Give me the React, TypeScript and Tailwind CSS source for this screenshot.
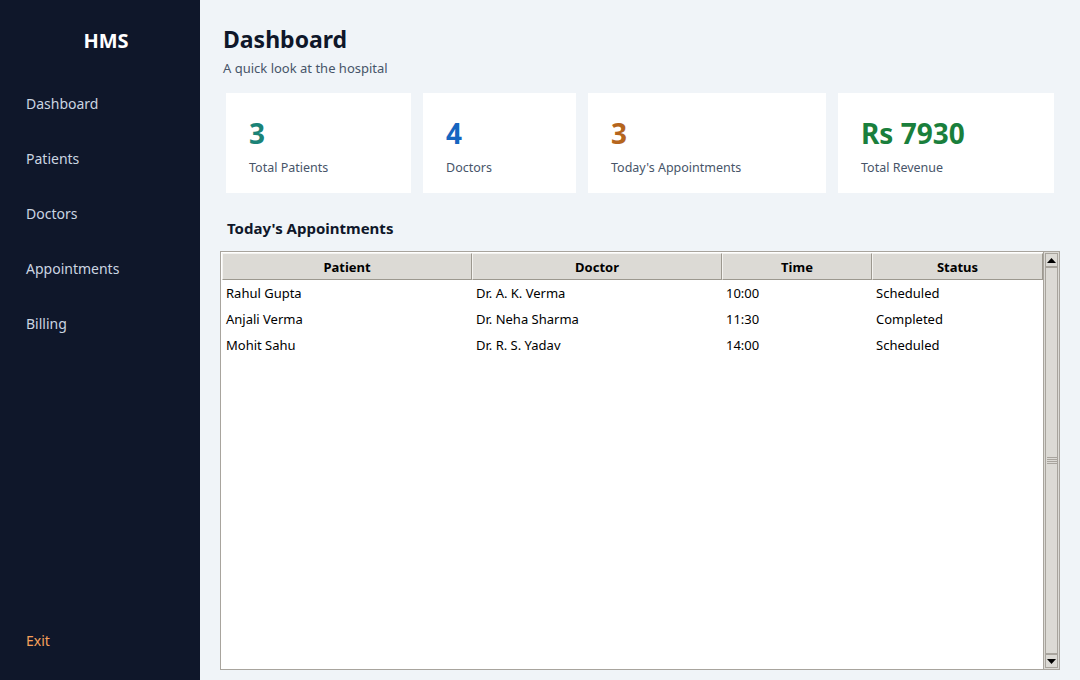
const navItems = ['Dashboard', 'Patients', 'Doctors', 'Appointments', 'Billing'];

const stats = [
  { value: '3', label: 'Total Patients', color: 'text-[#1b8377]', w: 'w-[185px]' },
  { value: '4', label: 'Doctors', color: 'text-[#1565c0]', w: 'w-[153px]' },
  { value: '3', label: "Today's Appointments", color: 'text-[#b5651d]', w: 'w-[238px]' },
  { value: 'Rs 7930', label: 'Total Revenue', color: 'text-[#1a7f3c]', w: 'w-[216px]' },
];

const rows = [
  ['Rahul Gupta', 'Dr. A. K. Verma', '10:00', 'Scheduled'],
  ['Anjali Verma', 'Dr. Neha Sharma', '11:30', 'Completed'],
  ['Mohit Sahu', 'Dr. R. S. Yadav', '14:00', 'Scheduled'],
];

const columns = [
  { name: 'Patient', w: 'w-[250px]' },
  { name: 'Doctor', w: 'w-[250px]' },
  { name: 'Time', w: 'w-[150px]' },
  { name: 'Status', w: 'w-[171px]' },
];

const App = () => {
  return (
    <div className="flex h-[680px] w-[1080px] overflow-hidden bg-[#f0f4f8] font-['Noto_Sans',sans-serif]">
      {/* Sidebar */}
      <aside className="flex w-[200px] flex-shrink-0 flex-col bg-[#0f172a]">
        <div className="pt-[27px] pl-[12px] text-center text-[20px] font-bold leading-[28px] text-white">HMS</div>
        <nav className="mt-[39px] flex flex-col">
          {navItems.map((item) => (
            <div key={item} className="h-[55px] pl-[26px] text-[14px] leading-[20px] text-[#cbd5e1]">
              {item}
            </div>
          ))}
        </nav>
        <div className="mt-auto pb-[29px] pl-[26px] text-[14px] leading-[20px] text-[#f6a05a]">Exit</div>
      </aside>

      {/* Main */}
      <main className="flex flex-1 flex-col pl-[20px] pr-[20px]">
        <h1 className="pt-[23px] pl-[3px] text-[23px] font-bold leading-[32px] text-[#0f172a]">Dashboard</h1>
        <p className="mt-[4px] pl-[3px] text-[13px] leading-[18px] text-[#475569]">A quick look at the hospital</p>

        <div className="mt-[16px] flex gap-[12px] pl-[6px]">
          {stats.map((s) => (
            <div key={s.label} className={`${s.w} h-[100px] bg-white pl-[23px] pt-[21px]`}>
              <div className={`${s.color} text-[28px] font-bold leading-[38px]`}>{s.value}</div>
              <div className="mt-[7px] text-[12.5px] leading-[18px] text-[#475569]">{s.label}</div>
            </div>
          ))}
        </div>

        <h2 className="mt-[24px] pl-[7px] text-[15px] font-bold leading-[22px] text-[#0f172a]">Today's Appointments</h2>

        {/* Table */}
        <div className="mt-[12px] flex h-[419px] w-[840px] border border-[#a8a49d] bg-white">
          <div className="flex flex-1 flex-col pl-[1px] pt-[1px]">
            <div className="flex h-[27px]">
              {columns.map((c) => (
                <div
                  key={c.name}
                  className={`${c.w} flex items-center justify-center border border-t-[#f4f3f0] border-l-[#f4f3f0] border-r-[#9c988f] border-b-[#9c988f] bg-[#dcdad5] pt-[2px] text-[13px] font-bold text-black`}
                >
                  {c.name}
                </div>
              ))}
            </div>
            {rows.map((r) => (
              <div key={r[0]} className="flex h-[26px] items-center pt-[1px] text-[13px] text-black">
                {r.map((cell, i) => (
                  <div key={i} className={`${columns[i].w} pl-[4px]`}>
                    {cell}
                  </div>
                ))}
              </div>
            ))}
          </div>

          {/* Scrollbar */}
          <div className="flex w-[16px] flex-col border-l border-[#a8a49d] bg-[#dcdad5] p-[1px]">
            <div className="flex h-[14px] items-center justify-center border border-[#a8a49d] bg-[#dcdad5]">
              <svg width="9" height="5" viewBox="0 0 9 5"><path d="M0 5 L4.5 0 L9 5 Z" fill="black" /></svg>
            </div>
            <div className="flex flex-1 items-center justify-center border border-[#a8a49d] bg-[#dcdad5]">
              <div className="flex flex-col gap-[1px]">
                <div className="h-[1px] w-[10px] bg-[#a8a49d]" />
                <div className="h-[1px] w-[10px] bg-[#a8a49d]" />
                <div className="h-[1px] w-[10px] bg-[#a8a49d]" />
                <div className="h-[1px] w-[10px] bg-[#a8a49d]" />
              </div>
            </div>
            <div className="flex h-[14px] items-center justify-center border border-[#a8a49d] bg-[#dcdad5]">
              <svg width="9" height="5" viewBox="0 0 9 5"><path d="M0 0 L9 0 L4.5 5 Z" fill="black" /></svg>
            </div>
          </div>
        </div>
      </main>
    </div>
  );
};

export default App;
